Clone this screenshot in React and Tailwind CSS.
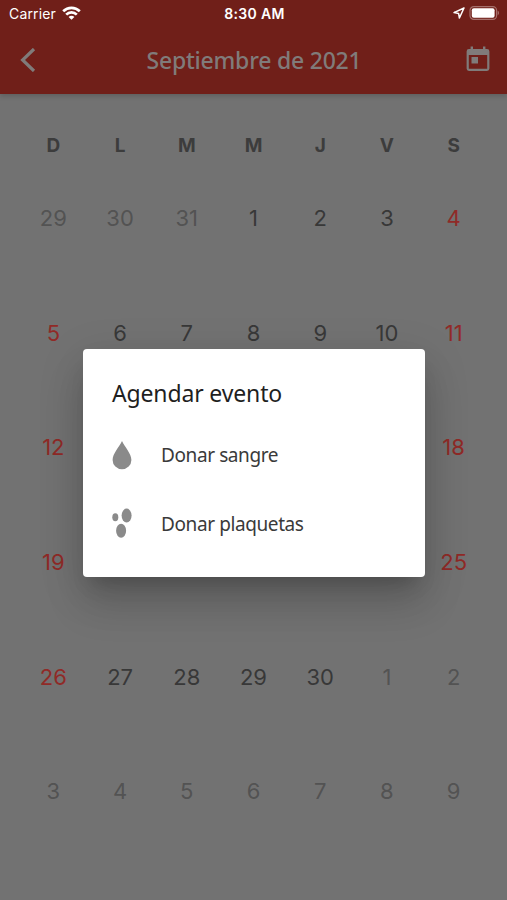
import { useState } from "react";

const weekDays = ["D", "L", "M", "M", "J", "V", "S"];

const weeks = [
  [29, 30, 31, 1, 2, 3, 4],
  [5, 6, 7, 8, 9, 10, 11],
  [12, 13, 14, 15, 16, 17, 18],
  [19, 20, 21, 22, 23, 24, 25],
  [26, 27, 28, 29, 30, 1, 2],
  [3, 4, 5, 6, 7, 8, 9],
];

const getDayColor = (day, week, col) => {
  const outside = (week === 0 && day > 7) || (week >= 4 && day < 10);
  if (outside) return "text-[#535353]";
  if (col === 0 || col === 6) return "text-[#902a27]";
  return "text-[#383838]";
};

const StatusBar = () => (
  <div className="h-[27px] grid grid-cols-3 items-center pl-[9px] pr-[7px] text-white text-[14px] font-['Inter',sans-serif]">
    <div className="flex items-center gap-[6px]">
      <span className="tracking-[0.15px]">Carrier</span>
      <svg className="-mt-[2px]" width="19" height="14" viewBox="0 0 19 14" fill="none" stroke="#fff" strokeWidth="2.7">
        <path d="M1.2 5.2a11.8 11.8 0 0 1 16.6 0" />
        <path d="M4.2 8.6a7.5 7.5 0 0 1 10.6 0" />
        <path d="M9.5 13.8 6.6 10.900a4 4 0 0 1 5.8 0z" fill="#fff" stroke="none" />
      </svg>
    </div>
    <span className="text-center font-semibold whitespace-nowrap tracking-[0.3px]">8:30 AM</span>
    <div className="flex items-center justify-end gap-[4px] -mt-[2px]">
      <svg width="12" height="12" viewBox="0 0 12 12" fill="none" stroke="#fff" strokeWidth="1.5" strokeLinejoin="round">
        <path d="M11 1 1 5.6l4.600.8.8 4.600z" />
      </svg>
      <svg width="31" height="14" viewBox="0 0 31 14">
        <rect x="1" y="0.6" width="26.6" height="12.8" rx="3.8" fill="none" stroke="#a56f6b" strokeWidth="1.2" />
        <rect x="2.8" y="2.2" width="22.8" height="9.6" rx="2" fill="#fff" />
        <path d="M28.7 4.8c1.7.5 1.7 3.900 0 4.400z" fill="#a56f6b" />
      </svg>
    </div>
  </div>
);

const DropIcon = () => (
  <svg width="20" height="29" viewBox="0 0 20 29" fill="#8a8a8a">
    <path d="M10 0C12.6 5.6 19.4 12.6 19.4 19a9.4 9.2 0 0 1-18.8 0C.6 12.6 7.4 5.6 10 0z" />
  </svg>
);

const PlateletsIcon = () => (
  <svg className="-mt-1" width="20" height="30" viewBox="0 0 20 30" fill="#8a8a8a">
    <ellipse cx="3.3" cy="9.3" rx="3" ry="4" />
    <ellipse cx="14.6" cy="7.6" rx="5" ry="7" />
    <ellipse cx="9.1" cy="22.8" rx="5" ry="7" />
  </svg>
);

const App = () => {
  const [open, setOpen] = useState(true);

  const options = [
    { label: "Donar sangre", icon: <DropIcon /> },
    { label: "Donar plaquetas", icon: <PlateletsIcon /> },
  ];

  return (
    <div className="relative w-full h-[900px] overflow-hidden bg-[#727272] flex flex-col">
      <header className="h-[94px] shrink-0 bg-[#701f19] shadow-[0_2px_5px_rgba(0,0,0,0.18)]">
        <StatusBar />
        <div className="h-[66px] grid grid-cols-[40px_1fr_40px] items-center pl-5 pr-[17px]">
          <button onClick={() => setOpen(false)}>
            <svg width="16" height="24" viewBox="0 0 16 24" fill="none" stroke="#807b7a" strokeWidth="3.2">
              <path d="M14 1 2.6 12 14 23" />
            </svg>
          </button>
          <h1 className="text-center -ml-[2px] text-[#807b7a] text-[23px] tracking-[-0.22px] font-medium font-['Noto_Sans',sans-serif]">
            Septiembre de 2021
          </h1>
          <button className="justify-self-end -mt-[2px]" onClick={() => setOpen(true)}>
            <svg width="24" height="26" viewBox="0 0 24 26" fill="#807b7a">
              <path fillRule="evenodd" d="M4.600 0.500h2.400v2.500h10V0.500h2.400v2.500h1.600a2.400 2.400 0 0 1 2.400 2.400v17.200A2.400 2.400 0 0 1 21 25H3a2.400 2.400 0 0 1-2.400-2.400V5.400A2.400 2.400 0 0 1 3 3h1.600zM2.800 9v13.800h18.400V9z" />
              <path d="M5.500 11h6.500v6.500H5.500z" />
            </svg>
          </button>
        </div>
      </header>

      <main className="px-5 pt-8 font-['Inter',sans-serif]">
        <div className="grid grid-cols-7 h-10 items-center text-center text-[19px] leading-[28px] font-bold text-[#3c3c3c]">
          {weekDays.map((day, idx) => (
            <span key={idx}>{day}</span>
          ))}
        </div>
        {weeks.map((week, row) => (
          <div key={row} className="grid grid-cols-7 h-[114.7px] pt-[35px] text-center text-[22px] leading-[35px]">
            {week.map((day, col) => (
              <span key={col} className={getDayColor(day, row, col)}>
                {day}
              </span>
            ))}
          </div>
        ))}
      </main>

      {/* Event dialog */}
      {open && (
        <div className="absolute left-[83px] top-[349px] w-[342px] h-[228px] rounded-[4px] bg-white px-[29px] pt-[27px] font-['Noto_Sans',sans-serif] shadow-[0_14px_19px_-9px_rgba(0,0,0,0.18),0_28px_40px_0px_rgba(0,0,0,0.13),0_12px_45px_4px_rgba(0,0,0,0.1)]">
          <h2 className="text-[23px] leading-[34px] tracking-[-0.15px] text-[#1f1f1f]">Agendar evento</h2>
          <ul className="mt-[11px]">
            {options.map((option) => (
              <li key={option.label} className="h-[69px] flex items-center gap-[29px] text-[19px] tracking-[-0.4px] text-[#3a3a3a]">
                {option.icon}
                {option.label}
              </li>
            ))}
          </ul>
        </div>
      )}
    </div>
  );
};

export default App;
